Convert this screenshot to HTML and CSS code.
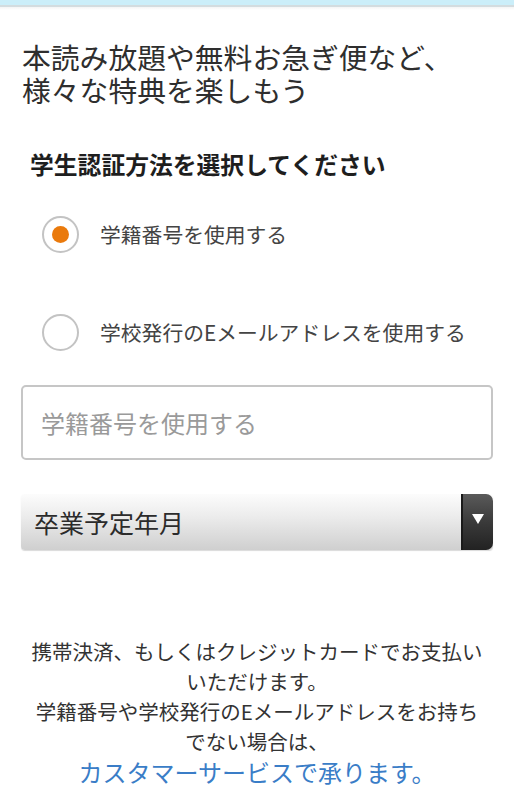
FILE: index.html
```html
<!DOCTYPE html>
<html lang="ja">
<head>
<meta charset="utf-8">
<link rel="stylesheet" href="styles.css">
</head>
<body>
<div class="topbar"></div>
<main class="page">
  <h1 class="lead"><span class="lead-line">本読み放題や無料お急ぎ便など、</span><span class="lead-line">様々な特典を楽しもう</span></h1>
  <h2 class="section-title">学生認証方法を選択してください</h2>
  <div class="options">
    <label class="option">
      <span class="radio checked"></span>
      <span class="option-label">学籍番号を使用する</span>
    </label>
    <label class="option">
      <span class="radio"></span>
      <span class="option-label">学校発行のEメールアドレスを使用する</span>
    </label>
  </div>
  <div class="field">
    <span class="placeholder">学籍番号を使用する</span>
  </div>
  <div class="select">
    <span class="select-text">卒業予定年月</span>
    <span class="select-btn"><svg width="12" height="10" viewBox="0 0 12 10"><path d="M0 0 H12 L6 10 Z" fill="#fff"/></svg></span>
  </div>
  <p class="note">携帯決済、もしくはクレジットカードでお支払い<br>いただけます。<br>学籍番号や学校発行のEメールアドレスをお持ち<br>でない場合は、<br><a class="link" href="#">カスタマーサービスで承ります。</a></p>
</main>
</body>
</html>
```

FILE: styles.css
```css
* { box-sizing: border-box; }
html, body {
  margin: 0;
  padding: 0;
  background: #fff;
  font-family: "Noto Sans CJK JP", "Noto Sans", sans-serif;
  color: #222;
}
.topbar {
  height: 10px;
  background: linear-gradient(to bottom, #cbeef9 0, #cbeef9 5px, #d3dcdf 5px, #d3dcdf 7px, #f4f4f4 7px, #fff 10px);
}
.page {
  padding: 30px 21px 0 21px;
}
.lead {
  margin: 0;
  font-size: 28.8px;
  font-weight: 400;
  color: #2e2e2e;
  padding-left: 1px;
}
.lead-line {
  display: block;
  height: 33px;
  line-height: 33px;
  white-space: nowrap;
}
.section-title {
  margin: 43px 0 0 9px;
  font-size: 23.8px;
  font-weight: 700;
  line-height: 30px;
  color: #1e1e1e;
}
.options {
  margin-top: 36px;
  display: flex;
  flex-direction: column;
  gap: 60px;
}
.option {
  display: flex;
  align-items: center;
  height: 38px;
  padding-left: 21px;
}
.radio {
  width: 37px;
  height: 37px;
  border-radius: 50%;
  border: 2px solid #c3c3c3;
  display: flex;
  align-items: center;
  justify-content: center;
  flex: none;
}
.radio.checked::after {
  content: "";
  width: 17px;
  height: 17px;
  border-radius: 50%;
  background: #ea7a0c;
}
.option-label {
  margin-left: 21px;
  font-size: 20.8px;
  line-height: 28px;
  color: #444;
}
.field {
  margin-top: 34px;
  height: 75px;
  border: 2px solid #c6c6c6;
  border-radius: 5px;
  display: flex;
  align-items: center;
  padding-left: 18px;
}
.placeholder {
  font-size: 24px;
  color: #9a9a9a;
  line-height: 30px;
}
.select {
  margin-top: 34px;
  height: 56px;
  display: flex;
  align-items: stretch;
  border-radius: 4px;
  background: linear-gradient(to bottom, #fcfcfc 0%, #ececec 40%, #cfcfcf 100%);
  box-shadow: 0 1px 1px rgba(0,0,0,0.15);
}
.select-text {
  flex: 1;
  display: flex;
  align-items: center;
  padding-left: 13px;
  font-size: 25px;
  color: #2b2b2b;
}
.select-btn {
  width: 32px;
  display: flex;
  align-items: center;
  justify-content: center;
  padding-bottom: 6px;
  background: linear-gradient(to bottom, #5a5a5a 0%, #3a3a3a 50%, #222 100%);
  border-radius: 0 7px 7px 0;
  border-left: 2px solid #1a1a1a;
}
.note {
  margin: 86px 0 0 0;
  text-align: center;
  font-size: 20.5px;
  line-height: 30px;
  color: #333;
}
.link {
  color: #3a7dc7;
  text-decoration: none;
  font-size: 24px;
  line-height: 32px;
}
```
